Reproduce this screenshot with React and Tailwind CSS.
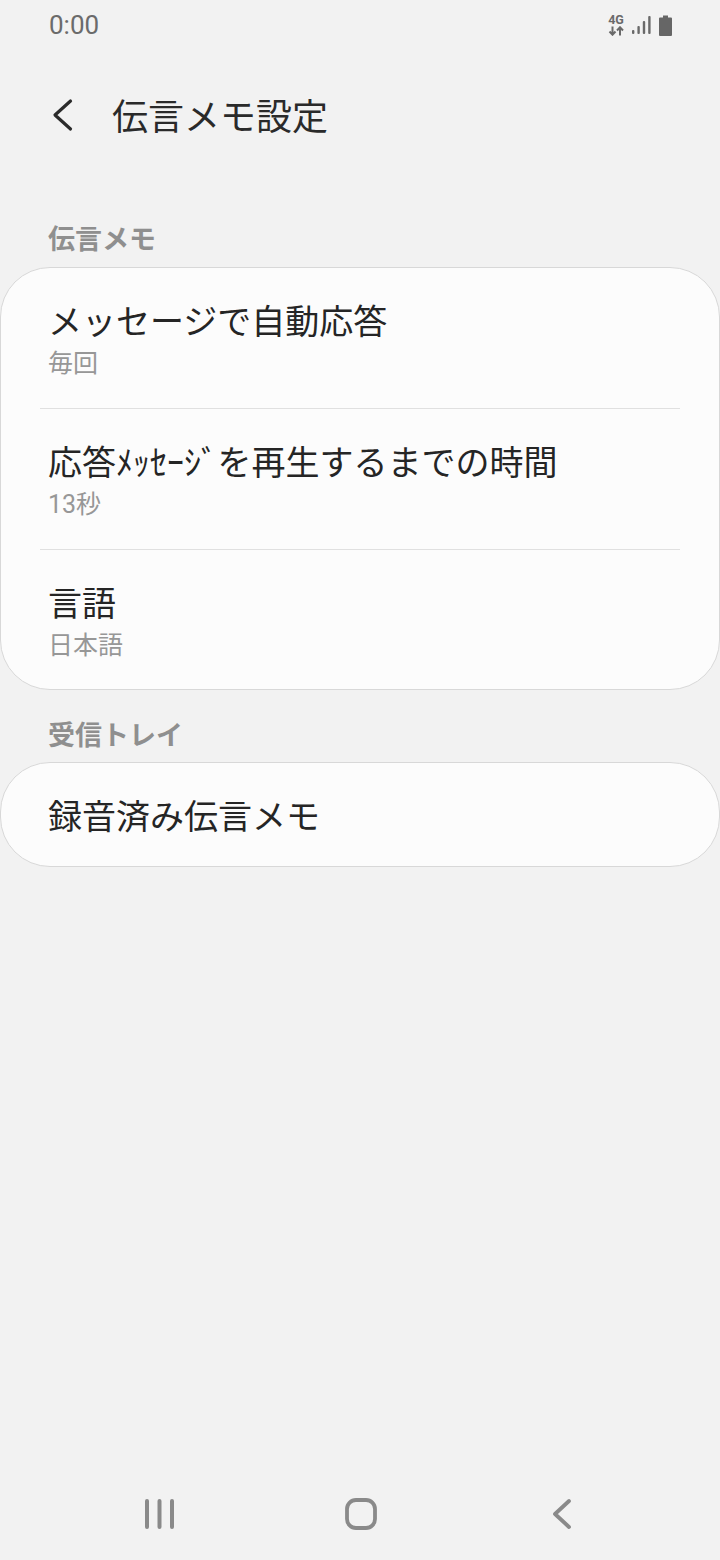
import React from 'react';

const voiceRows = [
  { title: 'メッセージで自動応答', sub: '毎回', height: 'h-[141px]', divider: true },
  {
    title: (
      <>
        応答ﾒｯｾｰｼﾞ<span className="ml-[-9px]"> を再生するまでの時間</span>
      </>
    ),
    sub: '13秒',
    height: 'h-[141px]',
    divider: true,
  },
  { title: '言語', sub: '日本語', height: 'h-[139px]' },
];

const StatusIcons = () => (
  <div className="flex items-center">
    <div className="flex flex-col items-center w-[16px] mr-[8px]">
      <span className="text-[12.5px] leading-[12px] font-bold text-[#6a6a6a] font-['Roboto',sans-serif]">4G</span>
      <svg width="16" height="10" viewBox="0 0 16 10" fill="none" stroke="#6a6a6a" strokeWidth="2">
        <path d="M4.500 0.500v8M1.500 5.500l3 3.200 3-3.200" />
        <path d="M12 9.500v-8M9 4.500l3-3.200 3 3.200" />
      </svg>
    </div>
    <svg className="mr-[8px]" width="19" height="20" viewBox="0 0 19 20" fill="#6a6a6a">
      <rect x="0" y="15" width="2.400" height="4" rx="1" />
      <rect x="5.400" y="11" width="2.400" height="8" rx="1" />
      <rect x="10.800" y="6" width="2.400" height="13" rx="1" />
      <rect x="16.200" y="1" width="2.400" height="18" rx="1" />
    </svg>
    <svg width="13" height="21" viewBox="0 0 13 21" fill="#666666">
      <path d="M4 0.500h5v2h3a1 1 0 0 1 1 1v16.500a1 1 0 0 1-1 1H1a1 1 0 0 1-1-1V3.500a1 1 0 0 1 1-1h3z" />
    </svg>
  </div>
);

const SectionLabel = ({ children, className }) => (
  <div className={`pl-[48px] text-[27px] leading-[34px] font-bold text-[#8f8f8f] ${className}`}>{children}</div>
);

export default function App() {
  return (
    <div className='w-[720px] h-[1560px] bg-[#f2f2f2] flex flex-col font-["Roboto","Noto_Sans_CJK_JP",sans-serif]'>
      <div className="h-[50px] flex items-center justify-between pl-[49px] pr-[48px] shrink-0">
        <span className="text-[26px] text-[#6b6b6b] font-['Roboto',sans-serif]">0:00</span>
        <StatusIcons />
      </div>

      <div className="h-[132px] flex items-start pt-[44px] shrink-0">
        <svg className="ml-[52px] mt-[4px]" width="22" height="34" viewBox="0 0 22 34" fill="none" stroke="#2b2b2b" strokeWidth="3.200" strokeLinecap="round" strokeLinejoin="round">
          <path d="M18.500 3 L3 17 L18.500 31" />
        </svg>
        <h1 className="ml-[38px] mt-[2px] text-[36px] leading-[44px] font-normal text-[#2a2a2a]">伝言メモ設定</h1>
      </div>

      <SectionLabel className="mt-[41px] mb-[10px]">伝言メモ</SectionLabel>
      <div className="bg-[#fcfcfc] border border-[#d8d8d8] rounded-[50px] flex flex-col">
        {voiceRows.map((row) => (
          <div key={row.sub} className={`${row.height} flex flex-col`}>
            <div className="flex-1 pl-[47px] pt-[31px]">
              <div className="text-[34px] leading-[46px] text-[#252525] whitespace-nowrap">{row.title}</div>
              <div className="text-[25px] leading-[32px] text-[#979797] mt-[3px]">{row.sub}</div>
            </div>
            {row.divider && <div className="mx-[39px] h-px bg-[#e0e0e0]" />}
          </div>
        ))}
      </div>

      <SectionLabel className="mt-[29px] mb-[9px]">受信トレイ</SectionLabel>
      <div className="h-[105px] bg-[#fcfcfc] border border-[#d8d8d8] rounded-[50px] flex items-center pl-[47px] pt-[4px]">
        <span className="text-[34px] leading-[46px] text-[#252525]">録音済み伝言メモ</span>
      </div>

      <div className="mt-auto h-[94px] shrink-0 pt-[31px]">
        <div className="ml-[59px] w-[604px] grid grid-cols-3 items-center justify-items-center">
          <svg width="30" height="32" viewBox="0 0 30 32" fill="none" stroke="#8a8a8a" strokeWidth="4" strokeLinecap="round">
            <path d="M2 3v26M14.500 3v26M27 3v26" />
          </svg>
          <svg width="32" height="32" viewBox="0 0 32 32" fill="none" stroke="#8a8a8a" strokeWidth="3.800">
            <rect x="2" y="2" width="28" height="28" rx="9" />
          </svg>
          <svg width="22" height="34" viewBox="0 0 22 34" fill="none" stroke="#8a8a8a" strokeWidth="3.800" strokeLinecap="round" strokeLinejoin="round">
            <path d="M18 4 L4 17 L18 30" />
          </svg>
        </div>
      </div>
    </div>
  );
}
